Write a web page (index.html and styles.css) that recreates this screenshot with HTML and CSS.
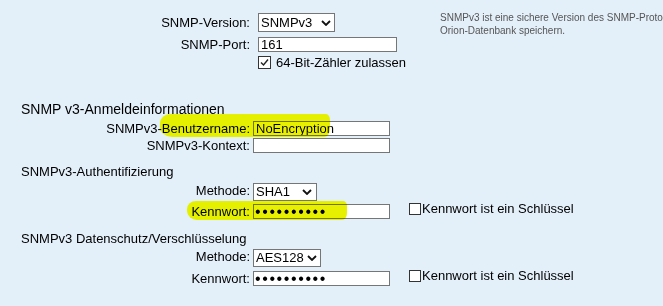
FILE: index.html
```html
<!DOCTYPE html>
<html>
<head lang="de">
    <meta charset="UTF-8">
    <title>SNMPv3-Anmeldeinformationen</title>
    <link rel="stylesheet" href="styles.css">
</head>
<body>
<div id="page">
    <div class="intro">
        <div class="top-form">
            <div class="row row-version">
                <label class="lbl" for="version">SNMP-Version:</label>
                <span class="select-wrap">
                    <select id="version" class="select sel-version">
                        <option>SNMPv3</option>
                    </select>
                    <svg class="chevron" width="10" height="6" viewBox="0 0 10 6"><polyline points="1,1 5,5 9,1" fill="none" stroke="#111" stroke-width="1.8"/></svg>
                </span>
            </div>
            <div class="row row-port">
                <label class="lbl" for="port">SNMP-Port:</label>
                <input id="port" class="text text-port" type="text" value="161">
            </div>
            <div class="row row-bits">
                <span class="lbl"></span>
                <label class="check check-wide">
                    <span class="box box-big"><svg width="11" height="11" viewBox="0 0 11 11"><polyline points="2,5.5 4.5,8 9,2.5" fill="none" stroke="#222" stroke-width="1.4"/></svg></span>
                    64-Bit-Zähler zulassen
                </label>
            </div>
        </div>
        <p class="hint">SNMPv3 ist eine sichere Version des SNMP-Protokolls. Sie können die SNMP-Anmeldeinformationen sicher in der<br>Orion-Datenbank speichern.</p>
    </div>

    <h3 class="group-title">SNMP v3-Anmeldeinformationen</h3>
    <div class="row row-user">
        <span class="marker marker-user"></span>
        <label class="lbl" for="user">SNMPv3-Benutzername:</label>
        <input id="user" class="text" type="text" value="NoEncryption">
    </div>
    <div class="row row-context">
        <label class="lbl" for="context">SNMPv3-Kontext:</label>
        <input id="context" class="text" type="text" value="">
    </div>

    <h4 class="sub-title sub-auth">SNMPv3-Authentifizierung</h4>
    <div class="row row-method">
        <label class="lbl" for="authmethod">Methode:</label>
        <span class="select-wrap">
            <select id="authmethod" class="select sel-sha">
                <option>SHA1</option>
            </select>
            <svg class="chevron" width="10" height="6" viewBox="0 0 10 6"><polyline points="1,1 5,5 9,1" fill="none" stroke="#111" stroke-width="1.8"/></svg>
        </span>
    </div>
    <div class="row row-pass">
        <span class="marker marker-pass"></span>
        <label class="lbl" for="authpass">Kennwort:</label>
        <input id="authpass" class="text pass" type="password" value="geheim1234">
        <label class="check check-key">
            <span class="box"></span>Kennwort ist ein Schlüssel
        </label>
    </div>

    <h4 class="sub-title sub-priv">SNMPv3 Datenschutz/Verschlüsselung</h4>
    <div class="row row-method2">
        <label class="lbl" for="privmethod">Methode:</label>
        <span class="select-wrap">
            <select id="privmethod" class="select sel-aes">
                <option>AES128</option>
            </select>
            <svg class="chevron chevron-aes" width="10" height="6" viewBox="0 0 10 6"><polyline points="1,1 5,5 9,1" fill="none" stroke="#111" stroke-width="1.8"/></svg>
        </span>
    </div>
    <div class="row row-pass2">
        <label class="lbl" for="privpass">Kennwort:</label>
        <input id="privpass" class="text pass" type="password" value="geheim1234">
        <label class="check check-key">
            <span class="box"></span>Kennwort ist ein Schlüssel
        </label>
    </div>
</div>
</body>
</html>
```

FILE: styles.css
```css
*{
    margin: 0;
    padding: 0;
    box-sizing: border-box;
}
html,body{
    background: #e4f0f9;
}
body{
    font: 13px/15px "Liberation Sans", Arial, sans-serif;
    color: #000;
    overflow: hidden;
}
#page{
    width: 663px;
    height: 306px;
}
.intro{
    display: flex;
}
.top-form{
    width: 440px;
    flex: none;
    padding-top: 13px;
}
.hint{
    padding-top: 11px;
    font-size: 10px;
    line-height: 13px;
    color: #555;
    white-space: nowrap;
}
.row{
    display: flex;
    align-items: flex-start;
    gap: 3px;
    position: relative;
}
.top-form .row{
    gap: 8px;
    align-items: center;
}
.lbl{
    width: 250px;
    flex: none;
    text-align: right;
    position: relative;
}
.row-version{ height: 19px; }
.row-port{ margin-top: 5px; }
.row-bits{ margin-top: 3px; height: 15px; }

.group-title{
    font-size: 14px;
    line-height: 16px;
    font-weight: normal;
    padding-left: 21px;
    margin-top: 31px;
}
.row-user{ margin-top: 4px; }
.row-context{ margin-top: 2px; }

.sub-title{
    font-size: 13px;
    line-height: 15px;
    font-weight: normal;
    padding-left: 21px;
}
.sub-auth{ margin-top: 11px; }
.row-method{ margin-top: 4px; }
.row-pass{ margin-top: 3px; }
.sub-priv{ margin-top: 12px; }
.row-method2{ margin-top: 3px; }
.row-pass2{ margin-top: 4px; }

/* eingabefelder */
.text{
    width: 137px;
    height: 15px;
    border: 1px solid #767676;
    background: #fff;
    font: 13px/13px "Liberation Sans", Arial, sans-serif;
    color: #000;
    padding: 0 2px;
    outline: none;
    position: relative;
}
.text-port{
    width: 139px;
}
.pass{
    font-size: 16px;
    line-height: 13px;
    letter-spacing: 1.6px;
    padding-left: 1px;
}

/* auswahllisten */
.select-wrap{
    position: relative;
    display: block;
}
.select{
    -webkit-appearance: none;
    appearance: none;
    display: block;
    height: 18px;
    border: 1px solid #767676;
    border-radius: 0;
    background: #fff;
    font: 13px/16px "Liberation Sans", Arial, sans-serif;
    color: #000;
    padding: 0 0 0 2px;
    outline: none;
}
.sel-version{ width: 77px; height: 19px; }
.sel-sha{ width: 64px; }
.sel-aes{ width: 68px; }
.chevron{
    position: absolute;
    right: 5px;
    top: 6px;
}
.sel-version + .chevron{ right: 4px; top: 7px; }
.chevron-aes{ right: 4px; }

/* checkboxen */
.check{
    display: flex;
    align-items: center;
    white-space: nowrap;
}
.check-wide{
    gap: 5px;
}
.box{
    width: 12px;
    height: 12px;
    border: 1px solid #333;
    background: #fff;
    display: block;
    flex: none;
}
.box-big{
    width: 13px;
    height: 13px;
}
.box svg{
    display: block;
}
.check-key{
    margin-left: 16px;
    margin-top: -3px;
    gap: 1px;
}

/* gelbe markierung */
.marker{
    position: absolute;
    background: #e6f000;
    mix-blend-mode: darken;
    z-index: 2;
    pointer-events: none;
}
.marker-user{
    left: 160px;
    top: -7px;
    width: 170px;
    height: 23px;
    border-radius: 10px 4px 6px 12px / 9px 6px 8px 10px;
}
.marker-pass{
    left: 187px;
    top: -3px;
    width: 160px;
    height: 19px;
    border-radius: 9px 4px 5px 10px / 8px 5px 7px 9px;
}
```
